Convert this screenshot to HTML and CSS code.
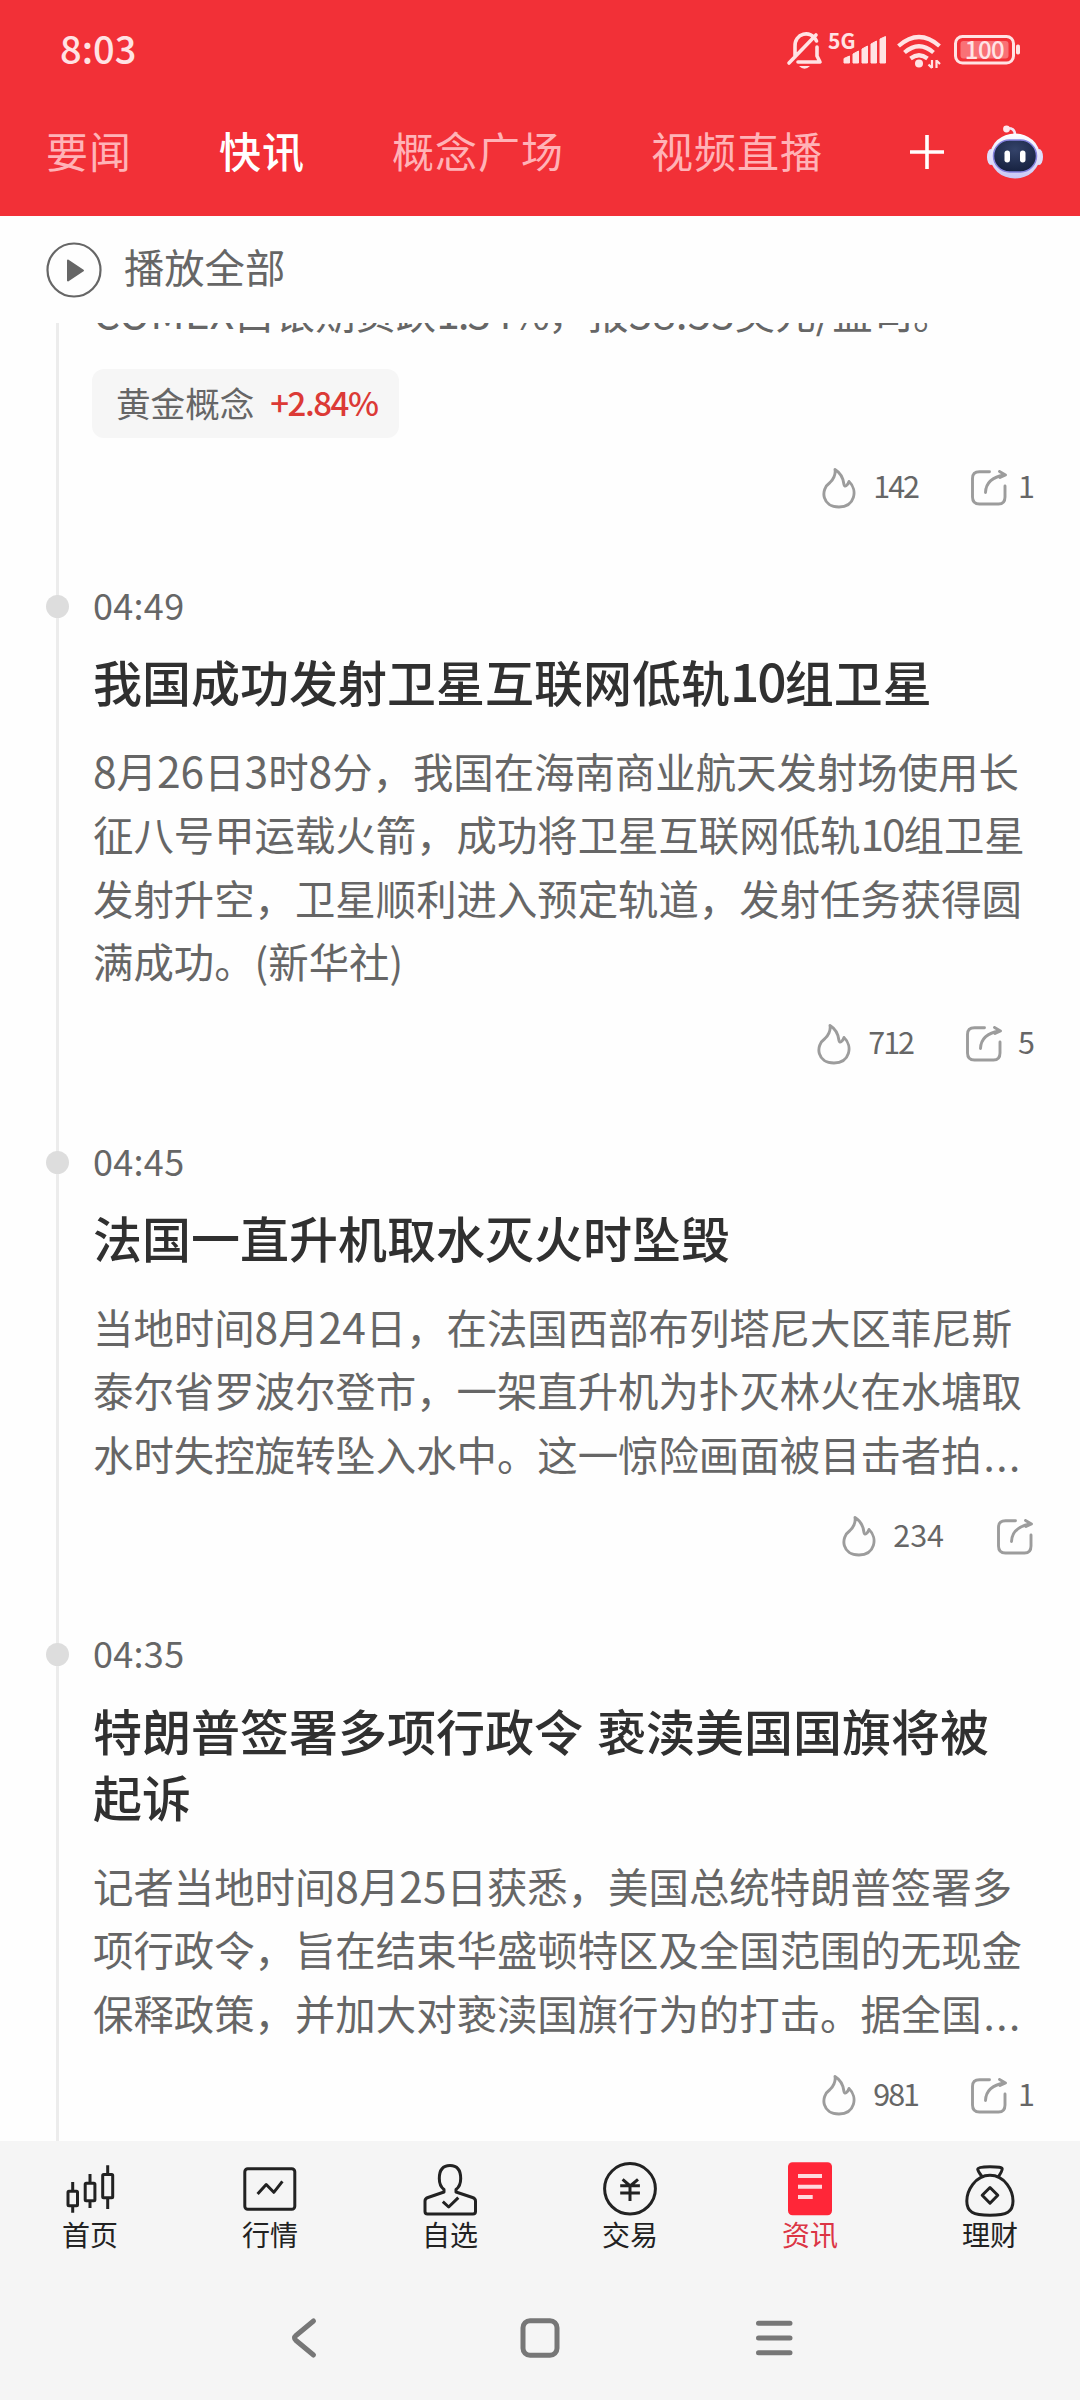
FILE: index.html
```html
<!DOCTYPE html>
<html lang="zh-CN">
<head>
<meta charset="utf-8">
<title>快讯</title>
<link rel="stylesheet" href="styles.css">
</head>
<body>
<svg class="defs" width="0" height="0">
  <symbol id="flame" viewBox="0 0 34 42">
    <path d="M13 2.500C20.500 7 21.500 13 22 17.500C22.500 20.500 25.500 19 27 14.500C36 23 33 40 17 40C0.500 40 -2.500 23 8 15.500C11 13 14 7.500 13 2.500Z"/>
  </symbol>
  <symbol id="share" viewBox="0 0 36 36">
    <path d="M18.500 1.800H8.500Q1.500 1.800 1.500 8.500V27Q1.500 34 8.500 34H27.500Q34 34 34 27V16M14.500 22.500Q15 8 34 4.800M28.500 1.500L34.500 5L29 7.500"/>
  </symbol>
</svg>
<div class="screen">
  <header class="header">
    <div class="status">
      <span class="clock">8:03</span>
      <svg class="status-icons" viewBox="786 28 236 44" width="236" height="44">
        <g fill="none" stroke="#ffe3e4" stroke-width="3.600" stroke-linecap="round" stroke-linejoin="round">
          <path d="M795 57V47C794 33 811 29 816.500 41M817 47V56L820 62H798M789 63L816 35"/>
        </g>
        <path d="M799 66H810Q804.500 71.500 799 66Z" fill="#ffe3e4"/>
        <text class="net" x="828" y="49">5G</text>
        <g fill="#ffe3e4">
          <path d="M844 63V58.500L849.500 56V63ZM853 63V54L858.500 51V63ZM862 63V49L867.500 46V63ZM871 63V44L876.500 41V63ZM880 63V39L885.500 36.500V63Z" stroke="#ffe3e4" stroke-width="1" stroke-linejoin="round"/>
        </g>
        <g fill="none" stroke="#ffe3e4" stroke-width="4.200">
          <path d="M898.500 46Q919 28 939.500 46M904.500 52.500Q919 40 933.500 52.500M910.500 58.500Q919 52 927.500 58.500"/>
          <path d="M932 60V68M936.500 60V68M928.500 64.500L932 68M936.500 60.500L940 64" stroke-width="2.200"/>
        </g>
        <circle cx="919" cy="63.500" r="4" fill="#ffe3e4"/>
        <rect x="955.500" y="36.500" width="58" height="26.500" rx="7" fill="none" stroke="#ffe3e4" stroke-width="3"/>
        <rect x="960.500" y="41" width="48" height="17.500" rx="3" fill="#f97176"/>
        <rect x="1016" y="44.500" width="4" height="10" rx="1.800" fill="#ffe3e4"/>
        <text class="charge" x="984.500" y="58.500" text-anchor="middle">100</text>
      </svg>
    </div>
    <nav class="tabs">
      <span class="tab">要闻</span>
      <span class="tab active">快讯</span>
      <span class="tab">概念广场</span>
      <span class="tab">视频直播</span>
      <svg class="plus" viewBox="0 0 34 34" width="34" height="34"><path d="M17 0V34M0 17H34" stroke="#fff" stroke-width="3.600"/></svg>
      <svg class="robot" viewBox="0 0 58 54" width="58" height="54">
        <defs>
          <linearGradient id="shell" x1="0" y1="0" x2="0" y2="1"><stop offset="0" stop-color="#fff"/><stop offset="1" stop-color="#c9c8f5"/></linearGradient>
          <radialGradient id="face" cx=".5" cy=".3" r=".7"><stop offset="0" stop-color="#34436a"/><stop offset="1" stop-color="#16213f"/></radialGradient>
        </defs>
        <path d="M20 3.500Q29 2 29 10" fill="none" stroke="#f4e4f4" stroke-width="2.600"/>
        <circle cx="20.500" cy="4" r="3.400" fill="#fde7ee"/>
        <ellipse cx="5" cy="32" rx="4" ry="8" fill="#dfddfb"/>
        <ellipse cx="53" cy="32" rx="4" ry="8" fill="#dfddfb"/>
        <ellipse cx="29" cy="31" rx="25" ry="22.500" fill="url(#shell)"/>
        <rect x="7.500" y="15" width="43" height="32" rx="16" fill="url(#face)" stroke="#8583df" stroke-width="1.500"/>
        <rect x="18.500" y="25.500" width="5.500" height="12" rx="2.700" fill="#fff"/>
        <rect x="34" y="25.500" width="5.500" height="12" rx="2.700" fill="#fff"/>
      </svg>
    </nav>
  </header>

  <div class="play-all">
    <svg viewBox="0 0 56 56" width="56" height="56"><circle cx="28" cy="28" r="26.500" fill="none" stroke="#666" stroke-width="2.200"/><path d="M22 18.500L37 28.500L22 38.500Z" fill="#666" stroke="#666" stroke-width="2" stroke-linejoin="round"/></svg>
    <span>播放全部</span>
  </div>

  <main class="feed">
    <article class="item item-cut">
      <p class="body"><span class="line"><span class="num">COMEX</span>白银期货跌<span class="num frac">1.34%</span>，报<span class="num">38.53</span>美元<span class="num">/</span>盎司。</span></p>
      <div class="chip"><span>黄金概念</span><b>+2.84%</b></div>
      <div class="actions"><svg class="fire"><use href="#flame"/></svg><span class="heat narrow">142</span><svg class="share"><use href="#share"/></svg><span class="count one">1</span></div>
    </article>

    <article class="item">
      <div class="time"><span>04:49</span></div>
      <h2 class="title">我国成功发射卫星互联网低轨<span class="ten">10</span>组卫星</h2>
      <p class="body">
        <span class="line"><span class="num">8</span>月<span class="num">26</span>日<span class="num">3</span>时<span class="num">8</span>分，我国在海南商业航天发射场使用长</span>
        <span class="line">征八号甲运载火箭，成功将卫星互联网低轨<span class="ten">10</span>组卫星</span>
        <span class="line">发射升空，卫星顺利进入预定轨道，发射任务获得圆</span>
        <span class="line">满成功。<span class="paren">(</span>新华社<span class="paren">)</span></span>
      </p>
      <div class="actions"><svg class="fire"><use href="#flame"/></svg><span class="heat narrow">712</span><svg class="share"><use href="#share"/></svg><span class="count">5</span></div>
    </article>

    <article class="item">
      <div class="time"><span>04:45</span></div>
      <h2 class="title">法国一直升机取水灭火时坠毁</h2>
      <p class="body">
        <span class="line">当地时间<span class="num">8</span>月<span class="num">24</span>日，在法国西部布列塔尼大区菲尼斯</span>
        <span class="line">泰尔省罗波尔登市，一架直升机为扑灭林火在水塘取</span>
        <span class="line">水时失控旋转坠入水中。这一惊险画面被目击者拍<span class="dots">...</span></span>
      </p>
      <div class="actions"><svg class="fire"><use href="#flame"/></svg><span class="heat">234</span><svg class="share"><use href="#share"/></svg></div>
    </article>

    <article class="item">
      <div class="time"><span>04:35</span></div>
      <h2 class="title">特朗普签署多项行政令<span class="space"> </span>亵渎美国国旗将被<br>起诉</h2>
      <p class="body">
        <span class="line">记者当地时间<span class="num">8</span>月<span class="num">25</span>日获悉，美国总统特朗普签署多</span>
        <span class="line">项行政令，旨在结束华盛顿特区及全国范围的无现金</span>
        <span class="line">保释政策，并加大对亵渎国旗行为的打击。据全国<span class="dots">...</span></span>
      </p>
      <div class="actions"><svg class="fire"><use href="#flame"/></svg><span class="heat narrow">981</span><svg class="share"><use href="#share"/></svg><span class="count one">1</span></div>
    </article>
  </main>

  <nav class="tabbar">
    <a class="entry"><svg viewBox="0 0 60 60"><g><rect x="8" y="31.200" width="9.500" height="14.600" rx="1"/><path d="M12.700 22V31M12.700 46V52.700M30 14V23M30 41V48M47.700 5.300V14M47.700 38V49"/><rect x="25.200" y="23.200" width="9.700" height="17.600" rx="1"/><rect x="42.700" y="14.500" width="10" height="23.300" rx="1"/></g></svg><span>首页</span></a>
    <a class="entry"><svg viewBox="0 0 60 60"><rect x="4.800" y="8.800" width="50" height="40.500" rx="3"/><path d="M17.600 34L26.200 24.500L33.800 32.300L42.400 21.300"/></svg><span>行情</span></a>
    <a class="entry"><svg viewBox="0 0 60 60"><path d="M24 29.500Q19.300 26 19.300 18.500Q19.300 5.500 30 5.500Q40.700 5.500 40.700 18.500Q40.700 26 36 29.500V32L52.500 37.500Q55.500 38.500 55.500 41V51.500Q55.500 54 53 54H7.500Q5 54 5 51.500V41Q5 38.500 8 37.500L24 32Z"/><path d="M22.800 41.700L28.700 47L38.300 37.700"/></svg><span>自选</span></a>
    <a class="entry"><svg viewBox="0 0 60 60"><ellipse cx="30" cy="28.800" rx="25.400" ry="25.200"/><path d="M22.600 19.300L30.200 26L38 19.300M20.200 25.700H39.900M20.200 33H39.900M30 26V41"/></svg><span>交易</span></a>
    <a class="entry selected"><svg viewBox="0 0 60 60"><rect class="sheet" x="8" y="2.300" width="44" height="53" rx="4.500"/><path class="rule" d="M18 16H42M18 26.700H42M18 37H32.700"/></svg><span>资讯</span></a>
    <a class="entry"><svg viewBox="0 0 60 60"><path d="M22 16.500Q18 11.500 17.700 9Q17.700 6.700 30 6.700Q42.500 6.700 42.200 9Q42 11.500 38.500 16.500M30 15.300C45 15.300 53 31 53 41C53 52 47 55.200 30 55.200C13 55.200 6.800 52 6.800 41C6.800 31 15 15.300 30 15.300Z"/><path d="M30 27.500L37.800 35.300L30 43.200L22.200 35.300Z"/></svg><span>理财</span></a>
  </nav>
  <nav class="sysnav">
    <svg viewBox="0 0 44 44"><path d="M29.500 5L12 19.500Q9 22 12 24.500L29.500 39"/></svg>
    <svg viewBox="0 0 44 44"><rect x="5" y="4.800" width="34" height="34.500" rx="7"/></svg>
    <svg viewBox="0 0 44 44"><path d="M6.500 7.300H38M6.500 22H38M6.500 36.700H38"/></svg>
  </nav>
</div>
</body>
</html>
```

FILE: styles.css
```css
* { box-sizing: border-box; margin: 0; padding: 0; }
body {
  width: 1080px;
  height: 2400px;
  background: #fefefe;
  font-family: "Noto Sans CJK SC", sans-serif;
  color: #666;
}
.defs { display: block; }
.screen { display: flex; flex-direction: column; width: 1080px; height: 2400px; overflow: hidden; }

.header { height: 216px; background: #f23037; color: #fff; }
.status { display: flex; justify-content: space-between; align-items: center; height: 100px; padding: 0 58px 0 60px; }
.clock { font-size: 38px; font-weight: 500; color: #ffe3e4; padding-bottom: 5px; }
.net { font-size: 21px; font-weight: 700; fill: #ffe3e4; }
.charge { font-size: 24px; font-weight: 500; fill: #ffe3e4; letter-spacing: -0.5px; }
.tabs { display: flex; align-items: center; height: 104px; padding-left: 46px; font-size: 42px; letter-spacing: 1px; white-space: nowrap; }
.tab { color: #ffb3b7; margin-right: 87px; padding-bottom: 5px; }
.tab.active { color: #fff; font-weight: 500; }
.plus { margin-right: 42px; }

.play-all { display: flex; align-items: center; gap: 22px; height: 107px; padding-left: 46px; font-size: 40.300px; flex: none; }
.play-all span { padding-bottom: 8px; }

.feed {
  height: 1818px;
  overflow: hidden;
  flex: none;
  background: linear-gradient(#ececec, #ececec) 56px 0 / 3px 100% no-repeat;
}
.item { padding: 0 45px 68.500px 93px; }
.item-cut { margin-top: -43px; }
.item-cut .body { margin-top: 0; }
.time { display: flex; align-items: center; height: 60px; font-size: 36px; margin-left: -47px; }
.time::before { content: ""; width: 23px; height: 23px; border-radius: 50%; background: #ddd; margin-right: 24px; }
.time span { padding-bottom: 5px; letter-spacing: 0.3px; }
.title { margin-top: 12px; font-size: 49px; line-height: 66.500px; font-weight: 500; color: #303030; white-space: nowrap; }
.space { letter-spacing: 3px; }
.body { margin-top: 24px; }
.line { display: block; height: 63.500px; line-height: 63.500px; font-size: 40.400px; white-space: nowrap; }
.num { font-size: 42.500px; line-height: 1; }
.frac { letter-spacing: -2px; }
.ten { font-size: 1.05em; line-height: 1; letter-spacing: -2px; }
.paren { line-height: 1; }
.dots { letter-spacing: 1.500px; margin-left: 2px; }

.chip { display: inline-flex; align-items: center; gap: 16px; height: 69px; margin-top: 25.500px; margin-left: -1px; padding: 0 22px 0 24px; border-radius: 12px; background: #f6f6f6; font-size: 34.600px; vertical-align: top; }
.chip span, .chip b { padding-bottom: 4px; }
.chip b { font-size: 33px; font-weight: 500; color: #dc3a36; letter-spacing: -1.500px; }

.actions { display: flex; justify-content: flex-end; align-items: center; height: 40px; margin-top: 31px; font-size: 30.500px; }
.item-cut .actions { margin-top: 29.500px; }
.fire { width: 34px; height: 42px; margin-right: 17px; }
.share { width: 36px; height: 36px; margin: 1px 2px 0 53px; }
.fire, .share { fill: none; stroke: #9c9c9c; stroke-width: 2.900; stroke-linejoin: round; stroke-linecap: round; }
.heat, .count { line-height: 40px; margin-top: -5px; }
.narrow { letter-spacing: -2px; }
.count { margin-left: 14px; }
.count.one { margin-left: 9px; }

.tabbar { display: grid; grid-template-columns: repeat(6, 1fr); height: 137px; padding-top: 19px; background: #f5f5f5; flex: none; }
.entry { display: flex; flex-direction: column; align-items: center; color: #222; font-size: 28px; line-height: 29px; }
.entry svg { width: 60px; height: 60px; fill: none; stroke: #222; stroke-width: 3; stroke-linejoin: round; }
.entry.selected { color: #dc3545; }
.entry .sheet { fill: #ff2638; stroke: none; }
.entry .rule { stroke: #ffdadd; stroke-width: 4; }

.sysnav { display: flex; justify-content: center; gap: 190px; padding-top: 38px; height: 122px; background: #f5f5f5; flex: none; }
.sysnav svg { width: 44px; height: 44px; fill: none; stroke: #777; stroke-width: 5; stroke-linecap: round; stroke-linejoin: round; }
```
